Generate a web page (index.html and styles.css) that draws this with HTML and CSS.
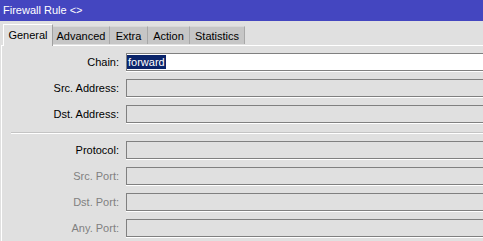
FILE: index.html
```html
<!DOCTYPE html>
<html>
<head>
<meta charset="utf-8">
<link rel="stylesheet" href="styles.css">
</head>
<body>
<div class="window">
  <div class="titlebar">Firewall Rule &lt;&gt;</div>
  <div class="tabs">
    <div class="tab active">General</div>
    <div class="tab t-adv">Advanced</div>
    <div class="tab t-extra">Extra</div>
    <div class="tab t-action">Action</div>
    <div class="tab t-stats">Statistics</div>
  </div>
  <div class="panel">
    <div class="row"><label class="lbl">Chain:</label><div class="field white"><span class="sel">forward</span></div></div>
    <div class="row"><label class="lbl">Src. Address:</label><div class="field"></div></div>
    <div class="row"><label class="lbl">Dst. Address:</label><div class="field"></div></div>
    <div class="sep"></div>
    <div class="row"><label class="lbl">Protocol:</label><div class="field"></div></div>
    <div class="row"><label class="lbl dim">Src. Port:</label><div class="field"></div></div>
    <div class="row"><label class="lbl dim">Dst. Port:</label><div class="field"></div></div>
    <div class="row"><label class="lbl dim">Any. Port:</label><div class="field"></div></div>
  </div>
</div>
</body>
</html>
```
FILE: styles.css
```css
html, body {
  margin: 0;
  padding: 0;
  background: #e0e0e0;
  overflow: hidden;
}
.window {
  width: 483px;
  height: 241px;
  font-family: "Liberation Sans", Arial, sans-serif;
  font-size: 11px;
  color: #000;
  overflow: hidden;
}
.titlebar {
  height: 21px;
  line-height: 20px;
  background: #4446c0;
  color: #fff;
  padding-left: 3px;
}
.tabs {
  display: flex;
  align-items: flex-end;
  height: 22px;
  margin-top: 2px;
  padding-left: 3px;
}
.tab {
  height: 17px;
  line-height: 18px;
  text-align: center;
  background: #c6c6c6;
  border-top: 1px solid #d8d8d8;
  border-right: 1px solid #a8a8a8;
  margin-bottom: 1px;
  white-space: nowrap;
}
.t-adv { width: 56px; }
.t-extra { width: 37px; }
.t-action { width: 41px; }
.t-stats { width: 54px; }
.tab.active {
  height: 21px;
  line-height: 21px;
  width: 48px;
  background: #e0e0e0;
  border-top: 1px solid #fff;
  border-left: 1px solid #fff;
  border-right: 1px solid #a0a0a0;
  position: relative;
  z-index: 1;
  margin-bottom: -1px;
}
.panel {
  border-top: 1px solid #fff;
  border-left: 1px solid #fff;
  margin-left: 1px;
  height: 200px;
  padding-top: 7px;
  display: flex;
  flex-direction: column;
}
.row {
  display: grid;
  grid-template-columns: 117px 1fr;
  column-gap: 7px;
  height: 18px;
  margin-bottom: 8px;
  align-items: center;
}
.lbl {
  text-align: right;
  white-space: nowrap;
}
.lbl.dim {
  color: #808080;
}
.field {
  height: 16px;
  width: 400px;
  border: 1px solid #808080;
  box-shadow: 0 1px 0 #fff;
  background: #e0e0e0;
  display: flex;
  align-items: center;
}
.field.white {
  background: #fff;
}
.sel {
  background: #0a246a;
  color: #fff;
  height: 14px;
  line-height: 14px;
  padding: 0 1px;
}
.sep {
  margin: 1px 0 7px 9px;
  height: 0;
  border-top: 1px solid #c4c4c4;
  border-bottom: 1px solid #fff;
}
```
